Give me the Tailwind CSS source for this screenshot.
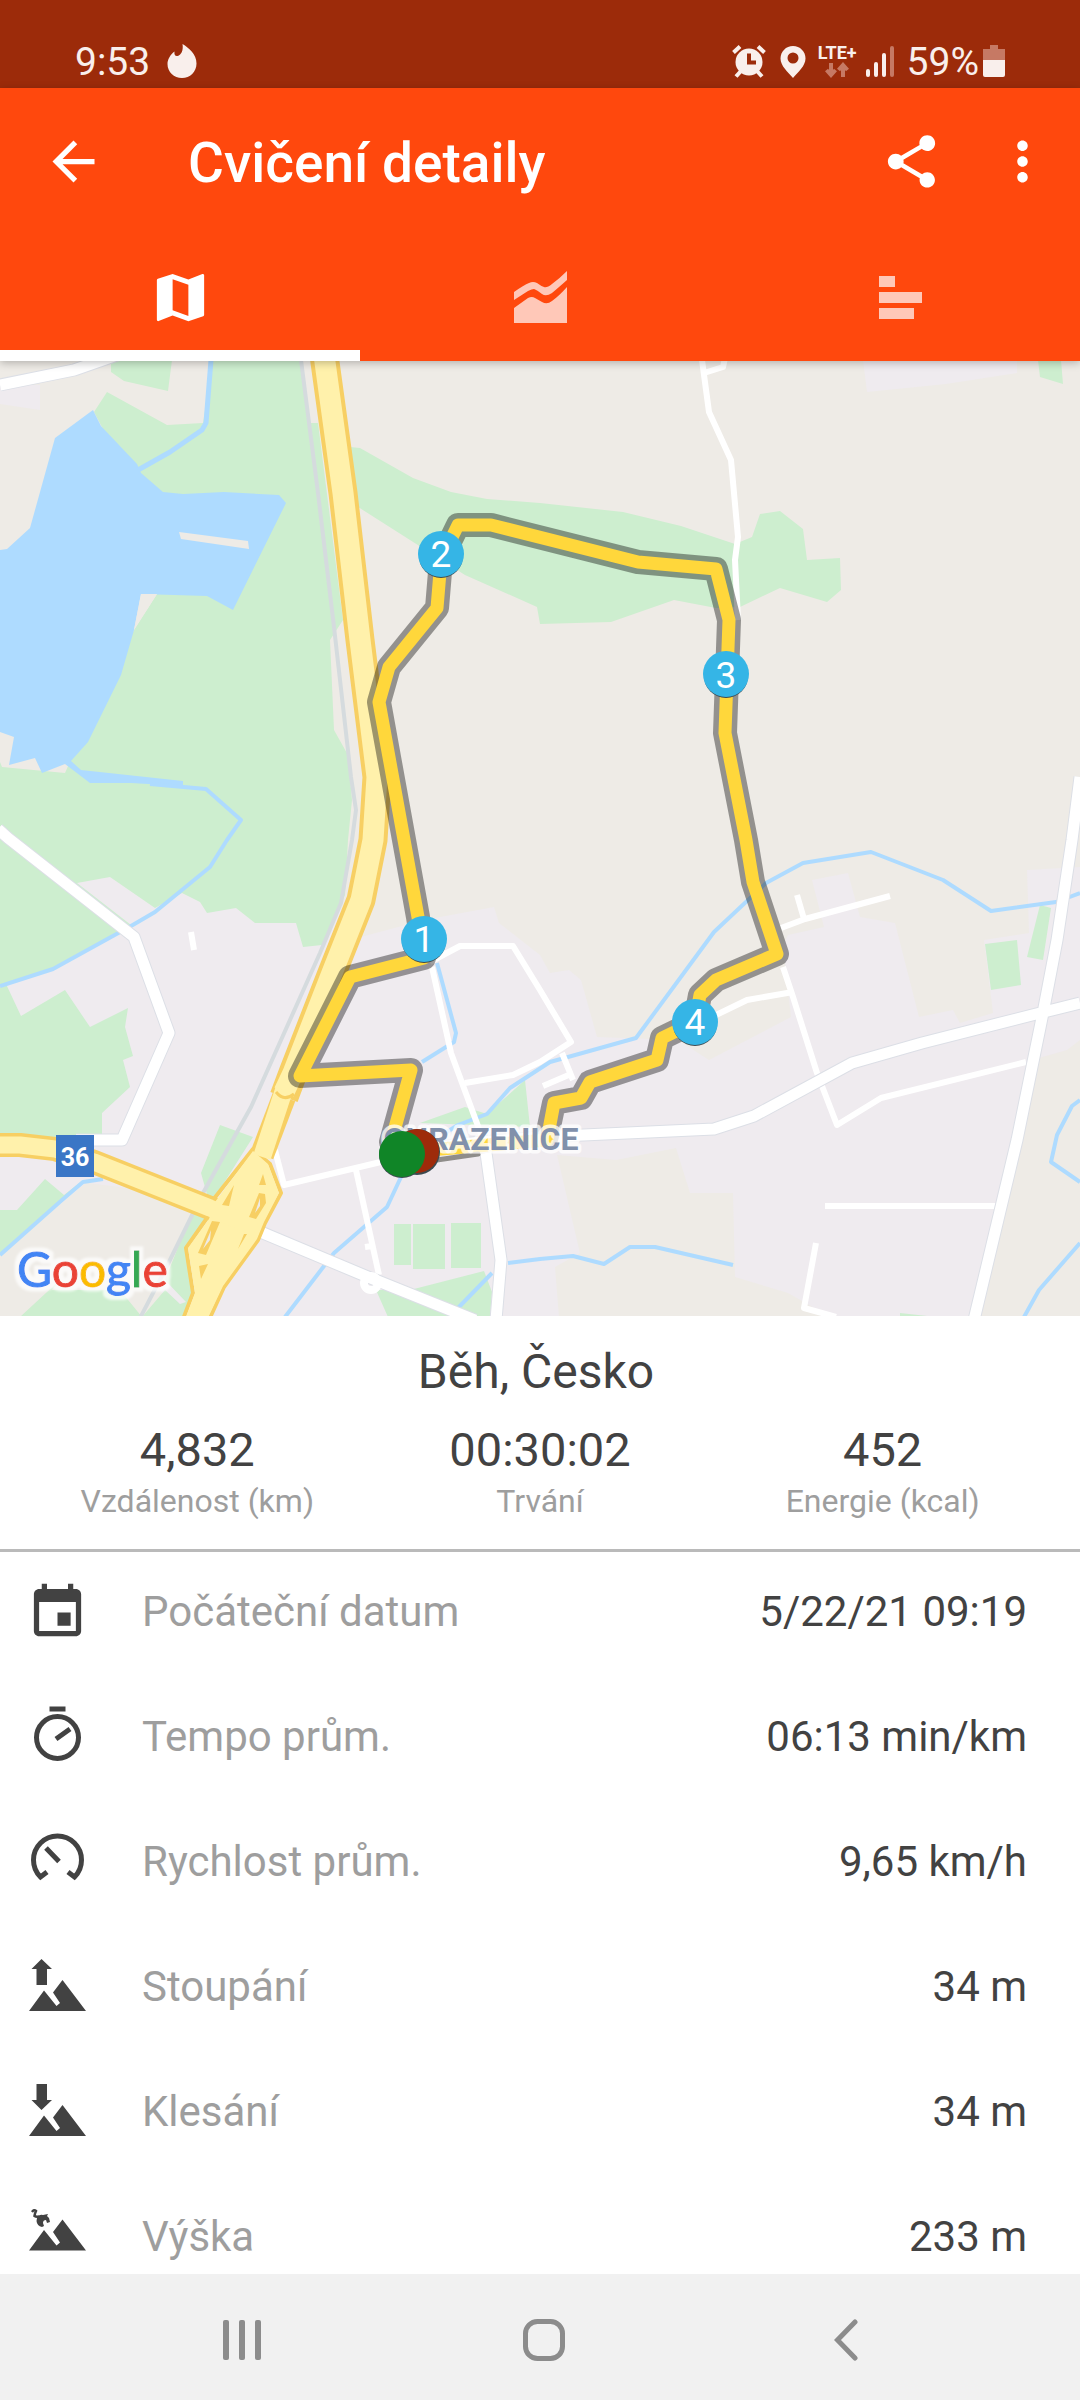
<!DOCTYPE html>
<html lang="cs">
<head>
<meta charset="utf-8">
<meta name="viewport" content="width=device-width, initial-scale=1">
<title>Cvičení detaily</title>
<script src="https://cdn.jsdelivr.net/npm/@tailwindcss/browser@4"></script>
</head>
<body class="bg-white">
<div class="flex h-screen flex-col overflow-hidden bg-white font-['Roboto',sans-serif] text-[#424242]">

  <!-- Status bar -->
  <div class="flex h-[88px] shrink-0 items-end justify-between bg-[#9c2b0a] px-[75px] pb-[10px] text-[39px] leading-[32px] text-[#f9efec]">
    <div class="flex items-end gap-[17px]">
      <span>9:53</span>
      <svg class="h-[34px] w-[30px]" viewBox="0 0 30 34" fill="currentColor"><path d="M15.500 0C22 4 29.500 10 29.500 19.500C29.500 28 23 34 15 34S.5 28 .5 20C.5 15.500 3 11 7.500 7.500C7 10 8 12.500 10.500 12C14.500 11 16.500 6 15.500 0Z"/></svg>
    </div>
    <div class="flex items-end">
      <svg class="h-[34px] w-[34px]" viewBox="0 0 34 34" fill="none" stroke="currentColor" stroke-width="4"><circle cx="17" cy="18" r="13.500" fill="currentColor" stroke="none"/><path d="M1.500 8.500L8 2.500M32.500 8.500L26 2.500M4 32.500L9 27M30 32.500L25 27"/><path d="M17 9.500V18.500H24" stroke="#9c2b0a"/></svg>
      <svg class="ml-[14px] h-[33px] w-[26px]" viewBox="0 0 26 33" fill="currentColor"><path fill-rule="evenodd" d="M13 1C6 1 .5 6.500 .5 13.500C.5 21 8 27 13 33C18 27 25.500 21 25.500 13.500C25.500 6.500 20 1 13 1ZM13 18.500A5.500 5.500 0 1 1 13 7.500A5.500 5.500 0 0 1 13 18.500Z"/></svg>
      <div class="ml-[12px] flex h-[34px] flex-col items-center text-[18px] leading-[18px] font-bold">
        <span>LTE+</span>
        <svg class="h-[16px] w-[24px]" viewBox="0 0 24 16" fill="none" stroke="#c67964" stroke-width="4"><path d="M6 1V13M1.500 8L6 13L10.500 8M18 15V3M13.500 8L18 3L22.500 8"/></svg>
      </div>
      <svg class="ml-[9px] h-[34px] w-[28px]" viewBox="0 0 28 34" fill="currentColor"><rect y="25" width="4" height="8" rx="2"/><rect x="8" y="18" width="4" height="15" rx="2"/><rect x="16" y="9" width="4" height="24" rx="2"/><rect x="24" y="2" width="4" height="31" rx="2" fill="#c67964"/></svg>
      <span class="ml-[13px]">59%</span>
      <svg class="ml-[4px] h-[34px] w-[22px]" viewBox="0 0 22 34" fill="#c67964"><path d="M7 1H15V5H22V17H0V5H7Z"/><path d="M0 16H22V31Q22 33 20 33H2Q0 33 0 31Z" fill="#f9efec"/></svg>
    </div>
  </div>

  <!-- App bar with tabs -->
  <header class="relative z-10 shrink-0 bg-[#ff480d] text-white shadow-[0_2px_8px_rgba(0,0,0,0.25)]">
    <div class="flex h-[146px] items-center pr-[26px] pl-[42px]">
      <button aria-label="Zpět"><svg class="h-[63px] w-[63px]" viewBox="0 0 24 24" fill="currentColor"><path d="M20 11H7.830l5.590-5.590L12 4l-8 8 8 8 1.410-1.410L7.830 13H20v-2z"/></svg></button>
      <h1 class="ml-[83px] flex-1 pt-1 text-[55px] leading-[60px] font-medium">Cvičení detaily</h1>
      <button aria-label="Sdílet"><svg class="h-[63px] w-[63px]" viewBox="0 0 24 24" fill="currentColor"><path d="M18 16.080c-.76 0-1.440.3-1.960.77L8.910 12.700c.05-.23.09-.46.09-.7s-.04-.47-.09-.7l7.050-4.110c.54.5 1.250.81 2.040.81 1.660 0 3-1.340 3-3s-1.340-3-3-3-3 1.340-3 3c0 .24.04.47.09.7L8.040 9.810C7.500 9.310 6.790 9 6 9c-1.660 0-3 1.340-3 3s1.340 3 3 3c.79 0 1.500-.31 2.040-.81l7.120 4.160c-.05.21-.08.43-.08.65 0 1.610 1.310 2.920 2.920 2.920s2.920-1.310 2.920-2.920-1.310-2.920-2.920-2.920z"/></svg></button>
      <button aria-label="Další možnosti" class="ml-[48px]"><svg class="h-[63px] w-[63px]" viewBox="0 0 24 24" fill="currentColor"><path d="M12 8c1.100 0 2-.9 2-2s-.9-2-2-2-2 .9-2 2 .9 2 2 2zm0 2c-1.100 0-2 .9-2 2s.9 2 2 2 2-.9 2-2-.9-2-2-2zm0 6c-1.100 0-2 .9-2 2s.9 2 2 2 2-.9 2-2-.9-2-2-2z"/></svg></button>
    </div>
    <nav class="grid h-[127px] grid-cols-3">
      <button aria-label="Mapa" class="flex items-center justify-center border-b-[11px] border-white pt-[11px]"><svg class="h-[63px] w-[63px]" viewBox="0 0 24 24" fill="currentColor"><path d="M20.500 3l-.16.03L15 5.100 9 3 3.360 4.900c-.21.07-.36.25-.36.48V20.500c0 .28.22.5.5.5l.16-.03L9 18.900l6 2.100 5.640-1.900c.21-.07.36-.25.36-.48V3.500c0-.28-.22-.5-.5-.5zM15 19l-6-2.110V5l6 2.110V19z"/></svg></button>
      <button aria-label="Grafy" class="flex items-center justify-center text-[#ffc8b8]"><svg class="h-[53px] w-[53px]" viewBox="0 0 53 53" fill="currentColor"><path d="M0 21Q10 14 15 12Q19 10 23 12Q27 15 30 16Q33 17 38 13Q45 8 53 0V9Q44 17 38 22Q32 26 28 23Q23 19 20 18Q18 18 14 20L0 29ZM0 37L14 27Q18 25 21 27L28 31Q33 34 38 30Q45 25 53 16V52H0Z"/></svg></button>
      <button aria-label="Úseky" class="flex items-center justify-center text-[#ffc8b8]"><svg class="h-[43px] w-[43px]" viewBox="0 0 43 43" fill="currentColor"><path d="M0 0H16V11H0ZM0 16H43V27H0ZM0 32H35V43H0Z"/></svg></button>
    </nav>
  </header>

  <!-- Map with the recorded route -->
  <svg role="img" aria-label="Mapa trasy" class="aspect-[1080/955] w-full shrink-0" viewBox="0 361 1080 955" font-family="Roboto, sans-serif">
    <defs>
      <filter id="halo" x="-15%" y="-20%" width="130%" height="140%">
        <feMorphology in="SourceAlpha" operator="dilate" radius="4" result="grown"/>
        <feGaussianBlur in="grown" stdDeviation="1" result="soft"/>
        <feFlood flood-color="#fff" flood-opacity=".75"/>
        <feComposite in2="soft" operator="in" result="glow"/>
        <feMerge><feMergeNode in="glow"/><feMergeNode in="SourceGraphic"/></feMerge>
      </filter>
    </defs>
    <rect y="361" width="1080" height="955" fill="#eeebe6"/>
    <g fill="#efebef">
      <path d="M0 385H40V410L0 404ZM863 360H1017V373L946 384L867 392Z"/>
      <path d="M0 960L77 880L110 870L330 870L350 940L424 920L494 907L499 923L540 955L550 973L569 970L581 980L597 1037L678 1040L709 1060L791 1017L783 945L788 935L824 927L812 880L848 873L860 917L895 923L919 1017L953 1010L960 1023L993 1013L984 940L1029 933L1027 870L1080 867V1040L1067 1050L1039 1058L970 1317H830L788 1293L735 1277L733 1193H690L676 1148L616 1160L557 1155L580 1253L555 1267L559 1317H180L160 1290L230 1200L86 1183L0 1255Z"/>
    </g>
    <path d="M86 1183L230 1205L160 1290L0 1317V1255Z" fill="#eeebe6"/>
    <g fill="#cdeecf">
      <path d="M111 360H172L168 391L124 381L111 372ZM94 412L107 392L167 425L203 423L213 360H300L310 423H318L343 620L330 640L334 730L348 755L352 800L348 840L345 895L322 945L303 947L296 923H255L236 908L207 913L200 902L182 893L155 908L110 877L77 883L131 925L53 969L0 985V762L2 767L65 773L75 750L134 630L157 594L200 540L130 480Z"/>
      <path d="M0 985L6 984L21 1016L65 990L90 1027L128 1008L125 1027L133 1056L123 1060L130 1087L102 1113V1145H0ZM0 1210H17L45 1179L64 1195L83 1180L0 1255ZM20 1317L60 1280L52 1290H120L142 1317ZM220 1125L253 1137L210 1205L201 1173ZM195 1205L210 1215L186 1248L193 1293L184 1317H142L165 1290L180 1304L186 1302L165 1280Z"/>
      <path d="M350 447L360 448L413 478L451 492L487 499L540 503L623 512L681 526L735 544L752 537L760 514L780 511L803 529L807 560L840 558L841 590L827 602L780 588L740 607L716 608L674 600L611 622L540 624L537 607L465 575L355 505Z"/>
      <path d="M985 944L1017 940L1021 985L991 990ZM1040 905L1051 908L1043 960L1027 957ZM1038 360H1061L1063 384L1040 377ZM900 1313L936 1317H900ZM394 1224H411V1265H394ZM413 1224H445V1269H413ZM451 1223H481V1268H451ZM376 1290L410 1290L484 1271L492 1292L490 1317H388ZM525 1080L530 1127L420 1123L465 1107L487 1114Z"/>
    </g>
    <g fill="#aedbff">
      <path d="M0 550L7 549L30 528L55 438L93 410L101 426L137 464L141 473L163 492L183 494L224 492L279 495L286 503L233 610L207 596L141 594L134 630L121 675L88 742L71 761L81 770L183 781V786L131 783L90 783L65 764L42 773L35 758L9 765L14 737L0 732Z"/>
    </g>
    <path d="M141 594H157L134 630Z" fill="#eeebe6"/>
    <path d="M179 532L248 541L249 549L181 539Z" fill="#eeebe6"/>
    <g fill="none" stroke="#aedbff" stroke-width="4" stroke-linejoin="round">
      <path d="M211 360L206 423L202 430L170 452L138 470" stroke-width="5"/>
      <path d="M150 784L206 789L241 820L227 840L210 867L155 912L131 926L53 969L0 986"/>
      <path d="M103 1179L83 1182L62 1200L0 1255M437 963L456 1033L454 1042L422 1062M401 1177L387 1207L334 1253L285 1317"/>
      <path d="M1080 893L1056 902L991 911L943 880L871 852L803 863L766 883L714 932L636 1038L568 1057L550 1062L510 1088L487 1114L458 1125L442 1135"/>
      <path d="M458 1308L492 1273M508 1263L540 1259L573 1256L604 1264L630 1247H655L733 1265M1080 1100L1072 1106L1057 1135L1051 1162L1080 1182M1080 1243L1039 1290L1024 1317"/>
    </g>
    <path d="M301 360L318 493L334 627L351 777L356 810L352 840L341 903L320 953L251 1107L203 1193L165 1270L139 1320" fill="none" stroke="#d5dbde" stroke-width="4"/>

    <!-- Local roads -->
    <g fill="none" stroke="#fff" stroke-width="6" stroke-linejoin="round">
      <path d="M702 360L709 412L731 460L738 537L735 560L738 620M704 373L723 367L725 358M191 932L194 950"/>
      <path d="M432 967L451 1053L482 1137M430 962L460 946H513L540 990L571 1042L540 1062L513 1075L465 1083M562 1053L573 1080M571 1074L543 1086"/>
      <path d="M275 1150L284 1185L385 1161M356 1170L379 1275M365 1247L372 1246"/>
      <path d="M783 967L793 997L817 1073L837 1125L881 1098L1026 1062M712 1017L747 1000L793 992M781 928L805 919L890 896M797 895L804 919M825 1206H998M816 1243L804 1308L836 1317"/>
    </g>
    <g fill="none" stroke="#dcdfe6" stroke-width="13" stroke-linejoin="round">
      <path d="M0 385L74 370L117 355M-2 829L8 838L134 937L169 1033L122 1140H76M486 1153L501 1260L496 1320M417 1151L460 1144L540 1137L714 1129L754 1116L852 1063L922 1043L1044 1012L1080 1003M1080 777L1072 840L1057 940L1043 1013L1017 1140L974 1320M256 1230L368 1277L475 1320"/>
    </g>
    <g fill="none" stroke="#fff" stroke-width="11" stroke-linejoin="round">
      <path d="M0 385L74 370L117 355M-2 829L8 838L134 937L169 1033L122 1140H76M486 1153L501 1260L496 1320M417 1151L460 1144L540 1137L714 1129L754 1116L852 1063L922 1043L1044 1012L1080 1003M1080 777L1072 840L1057 940L1043 1013L1017 1140L974 1320M256 1230L368 1277L475 1320"/>
      <circle cx="371" cy="1283" r="7" stroke-width="8"/>
    </g>

    <!-- Highway and interchange -->
    <g fill="none" stroke="#f7cf63" stroke-linejoin="round">
      <path d="M324 355L343 493L360 640L377 777L373 840L361 900L332 973L293 1073L284 1097" stroke-width="29"/>
      <path d="M284 1097L262 1155" stroke-width="24"/>
      <path d="M-5 1145H20L55 1149L94 1162L210 1208L240 1220" stroke-width="24"/>
      <path d="M253 1149L213 1200L207 1218L186 1248L193 1293L182 1322H208L224 1287L258 1240L265 1223L281 1193L270 1164Z" stroke-width="4"/>
    </g>
    <g fill="none" stroke="#fff1ab" stroke-linejoin="round">
      <path d="M324 355L343 493L360 640L377 777L373 840L361 900L332 973L293 1073L284 1092" stroke-width="21"/>
      <path d="M284 1090L262 1157" stroke-width="18"/>
      <path d="M253 1151L215 1202L209 1219L188 1248L195 1293L184 1322H206L223 1286L257 1239L264 1222L279 1193L268 1164Z" fill="#fff1ab" stroke="none"/>
      <path d="M-5 1145H20L55 1149L94 1162L210 1208L256 1228" stroke-width="17"/>
    </g>
    <g fill="#f7cf63">
      <path d="M234 1185L222 1205L229 1206ZM263 1174L259 1185H266ZM212 1221L198 1253L206 1255L220 1222ZM244 1234L238 1249L247 1234ZM199 1266L201 1279L208 1264ZM259 1193L249 1217L256 1219L266 1203L265 1194Z"/>
      <path d="M276 1092Q284 1102 294 1094" fill="none" stroke="#f7cf63" stroke-width="3"/>
    </g>
    <path d="M260 1198L255 1213L260 1206ZM211 1230L203 1249L210 1240Z" fill="#eeebe6"/>

    <rect x="56" y="1135" width="38" height="42" fill="#3a76c6"/>
    <text x="75" y="1166" text-anchor="middle" font-size="25" font-weight="700" fill="#fff">36</text>

    <!-- Recorded route -->
    <g fill="none" stroke-linejoin="round" stroke-linecap="round">
      <path d="M402 1154L391 1142L411 1070L300 1076L350 977L424 958L418 917L379 702L389 667L437 608L441 560L458 525H491L638 562L716 569L729 620L725 733L746 840L753 882L777 954L716 980L700 995L695 1022L662 1038L657 1060L590 1082L581 1098L554 1103L547 1136" stroke="#000" stroke-opacity=".38" stroke-width="24"/>
      <path d="M402 1154L391 1142L411 1070L300 1076L350 977L424 958L418 917L379 702L389 667L437 608L441 560L458 525H491L638 562L716 569L729 620L725 733L746 840L753 882L777 954L716 980L700 995L695 1022L662 1038L657 1060L590 1082L581 1098L554 1103L547 1140L417 1151" stroke="#ffd73b" stroke-width="13"/>
      <path d="M430 1161L478 1154" stroke="#8f8d8a" stroke-width="5"/>
    </g>
    <text x="481" y="1150" text-anchor="middle" font-size="32" font-weight="700" fill="#8190ab" stroke="#fff" stroke-opacity=".75" stroke-width="7" stroke-linejoin="round" paint-order="stroke">OHRAZENICE</text>

    <!-- Start, finish and kilometre markers -->
    <g fill="#3c4a50">
      <circle cx="417" cy="1152" r="23"/><circle cx="402" cy="1155" r="23"/><circle cx="424" cy="941" r="22"/><circle cx="441" cy="556" r="22"/><circle cx="726" cy="676" r="22"/><circle cx="695" cy="1024" r="22"/>
    </g>
    <circle cx="417" cy="1151" r="22" fill="#9e2b0a"/>
    <circle cx="402" cy="1154" r="23" fill="#108527"/>
    <g fill="#35b5e6">
      <circle cx="424" cy="939" r="23"/><circle cx="441" cy="554" r="23"/><circle cx="726" cy="674" r="23"/><circle cx="695" cy="1022" r="23"/>
    </g>
    <g fill="#fff" font-size="37" text-anchor="middle">
      <text x="424" y="952">1</text><text x="441" y="567">2</text><text x="726" y="688">3</text><text x="695" y="1035">4</text>
    </g>

    <text x="17" y="1287" font-family="Lato, sans-serif" font-size="48" stroke-width="1" fill="#4285f4" stroke="#4285f4" filter="url(#halo)">G<tspan fill="#ea4335" stroke="#ea4335">o</tspan><tspan fill="#fbbc05" stroke="#fbbc05">o</tspan>g<tspan fill="#34a853" stroke="#34a853">l</tspan><tspan fill="#ea4335" stroke="#ea4335">e</tspan></text>
  </svg>

  <!-- Summary -->
  <section class="shrink-0 border-b-[3px] border-[#bababa] px-[26px] pt-[25px] pb-[25px]">
    <h2 class="pr-2 text-center text-[48px] leading-[62px]">Běh, Česko</h2>
    <dl class="mt-[18px] grid grid-cols-3 text-center">
      <div class="flex flex-col-reverse"><dt class="text-[32px] leading-[45px] text-[#9e9e9e]">Vzdálenost (km)</dt><dd class="text-[47px] leading-[58px]">4,832</dd></div>
      <div class="flex flex-col-reverse"><dt class="text-[32px] leading-[45px] text-[#9e9e9e]">Trvání</dt><dd class="text-[47px] leading-[58px]">00:30:02</dd></div>
      <div class="flex flex-col-reverse"><dt class="text-[32px] leading-[45px] text-[#9e9e9e]">Energie (kcal)</dt><dd class="text-[47px] leading-[58px]">452</dd></div>
    </dl>
  </section>

  <!-- Detail list -->
  <dl class="flex min-h-0 flex-1 flex-col gap-[5px] overflow-hidden text-[42px] leading-[50px]">
    <div class="flex h-[120px] shrink-0 items-center pr-[53px] pl-[26px]">
      <svg class="h-[63px] w-[63px]" viewBox="0 0 24 24" fill="currentColor"><path d="M17 12h-5v5h5v-5zM16 1v2H8V1H6v2H5c-1.110 0-1.990.9-1.990 2L3 19c0 1.100.89 2 2 2h14c1.100 0 2-.9 2-2V5c0-1.100-.9-2-2-2h-1V1h-2zm3 18H5V8h14v11z"/></svg>
      <dt class="ml-[53px] flex-1 text-[#9e9e9e]">Počáteční datum</dt><dd>5/22/21 09:19</dd>
    </div>
    <div class="flex h-[120px] shrink-0 items-center pr-[53px] pl-[26px]">
      <svg class="h-[63px] w-[63px]" viewBox="0 0 63 63" fill="none" stroke="currentColor" stroke-width="5"><path d="M23.500 3H39.500M30 33L44 23"/><circle cx="31.500" cy="31.500" r="21"/></svg>
      <dt class="ml-[53px] flex-1 text-[#9e9e9e]">Tempo prům.</dt><dd>06:13 min/km</dd>
    </div>
    <div class="flex h-[120px] shrink-0 items-center pr-[53px] pl-[26px]">
      <svg class="h-[63px] w-[63px]" viewBox="0 0 63 63" fill="none" stroke="currentColor" stroke-width="5"><path d="M21 41L14.500 46A24 24 0 1 1 48.500 46L42 41M20 17L33 30.500"/></svg>
      <dt class="ml-[53px] flex-1 text-[#9e9e9e]">Rychlost prům.</dt><dd>9,65 km/h</dd>
    </div>
    <div class="flex h-[120px] shrink-0 items-center pr-[53px] pl-[26px]">
      <svg class="h-[63px] w-[63px]" viewBox="0 0 63 63" fill="currentColor"><path d="M15.500 3L26 13H21V29H10.500V13H5.500ZM3 55L18 34.500L30.500 50L34 47L27 36.500L36.500 24L60 55Z"/></svg>
      <dt class="ml-[53px] flex-1 text-[#9e9e9e]">Stoupání</dt><dd>34 m</dd>
    </div>
    <div class="flex h-[120px] shrink-0 items-center pr-[53px] pl-[26px]">
      <svg class="h-[63px] w-[63px]" viewBox="0 0 63 63" fill="currentColor"><path d="M15.500 29L26 19H21V3H10.500V19H5.500ZM3 55L18 34.500L30.500 50L34 47L27 36.500L36.500 24L60 55Z"/></svg>
      <dt class="ml-[53px] flex-1 text-[#9e9e9e]">Klesání</dt><dd>34 m</dd>
    </div>
    <div class="flex h-[120px] shrink-0 items-center pr-[53px] pl-[26px]">
      <svg class="h-[63px] w-[63px]" viewBox="0 0 63 63" fill="currentColor"><path d="M3 44.500L18 24L30.500 39.500L34 36.500L27 26L36.500 13.500L60 44.500Z"/><path d="M11 12Q13 8 17 9L22 8L21 10L23 12L24 16L21 17L20 14Q17 14 17 17L18 20L16 21Q11 20 10.500 15Z"/><path d="M6 6Q8 3 10 5Q9 7 8.500 10Q10 11 13 10.500" fill="none" stroke="currentColor" stroke-width="2.500"/></svg>
      <dt class="ml-[53px] flex-1 text-[#9e9e9e]">Výška</dt><dd>233 m</dd>
    </div>
  </dl>

  <!-- System navigation -->
  <nav class="grid h-[126px] shrink-0 grid-cols-3 bg-[#f1f1f1] pt-[6px] pr-[83px] pl-[91px] text-[#8c8c8c]">
    <button aria-label="Poslední aplikace" class="flex items-center justify-center"><svg class="h-[40px] w-[38px]" viewBox="0 0 38 40" fill="currentColor"><rect width="6" height="40" rx="2"/><rect x="16" width="6" height="40" rx="2"/><rect x="32" width="6" height="40" rx="2"/></svg></button>
    <button aria-label="Domů" class="flex items-center justify-center"><svg class="h-[42px] w-[42px]" viewBox="0 0 42 42" fill="none" stroke="currentColor" stroke-width="5"><rect x="2.500" y="2.500" width="37" height="37" rx="12"/></svg></button>
    <button aria-label="Zpět" class="flex items-center justify-center"><svg class="h-[42px] w-[24px]" viewBox="0 0 24 42" fill="none" stroke="currentColor" stroke-width="5" stroke-linecap="round"><path d="M21 3L3.500 21L21 39"/></svg></button>
  </nav>
</div>
</body>
</html>
